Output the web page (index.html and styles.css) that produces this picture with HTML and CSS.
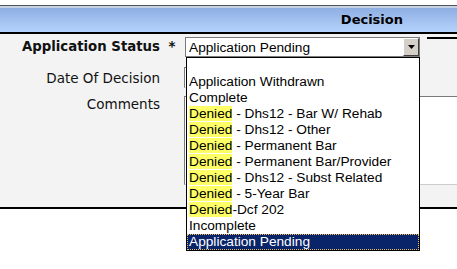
FILE: index.html
```html
<!DOCTYPE html>
<html>
<head>
<meta charset="utf-8">
<link rel="stylesheet" href="styles.css">
</head>
<body>
<div class="top-gap"></div>
<div class="header"><span class="title">Decision</span></div>
<div class="form">
  <div class="row row-status">
    <div class="label bold">Application Status</div>
    <div class="req">*</div>
    <div class="field status-field">
      <div class="select">
        <span class="select-text">Application Pending</span>
        <span class="select-btn"><svg width="7" height="4" viewBox="0 0 7 4"><path d="M0 0h7L3.5 4z" fill="#000"/></svg></span>
      </div>
      <ul class="dropdown">
        <li>&nbsp;</li>
        <li>Application Withdrawn</li>
        <li>Complete</li>
        <li><span class="hl">Denied</span> - Dhs12 - Bar W/ Rehab</li>
        <li><span class="hl">Denied</span> - Dhs12 - Other</li>
        <li><span class="hl">Denied</span> - Permanent Bar</li>
        <li><span class="hl">Denied</span> - Permanent Bar/Provider</li>
        <li><span class="hl">Denied</span> - Dhs12 - Subst Related</li>
        <li><span class="hl">Denied</span> - 5-Year Bar</li>
        <li><span class="hl">Denied</span>-Dcf 202</li>
        <li>Incomplete</li>
        <li class="selected">Application Pending</li>
      </ul>
    </div>
    <div class="side-rule"></div>
  </div>
  <div class="row row-date">
    <div class="label">Date Of Decision</div>
    <div class="req"></div>
    <div class="field"><div class="date-input"></div></div>
  </div>
  <div class="row row-comments">
    <div class="label">Comments</div>
    <div class="req"></div>
    <div class="field grow"><div class="textarea"></div></div>
  </div>
</div>
</body>
</html>
```
FILE: styles.css
```css
html, body {
  margin: 0;
  background: #fff;
}
body {
  font-family: "DejaVu Sans", Verdana, sans-serif;
  color: #111;
  min-height: 269px;
}
.top-gap { height: 5px; }
.header {
  height: 26px;
  border-top: 1px solid #52565c;
  border-bottom: 2px solid #000;
  background: linear-gradient(#c6d2e4 0, #c6d2e4 2px, #8eaee2 2px, #b5d3fd 100%);
  display: flex;
  justify-content: flex-end;
  align-items: center;
  padding-right: 54px;
}
.title {
  font-weight: bold;
  font-size: 13px;
  color: #000;
}
.form {
  background: #f3f3f3;
  height: 170px;
  padding-top: 3px;
  border-bottom: 2px solid #000;
}
.row { display: flex; }
.row-status { height: 20px; align-items: center; position: relative; z-index: 2; }
.row-date { height: 21px; margin-top: 10px; align-items: center; }
.row-comments { height: 89px; margin-top: 8px; align-items: flex-start; }
.label {
  width: 160px;
  flex: none;
  text-align: right;
  font-size: 13.5px;
  line-height: 16px;
  white-space: nowrap;
}
.label.bold { font-weight: bold; font-size: 13.3px; }
.req {
  width: 24px;
  flex: none;
  text-align: center;
  font-weight: bold;
  font-size: 13.3px;
  line-height: 16px;
}
.field { flex: none; }
.field.grow { flex: 1; min-width: 0; }
.status-field { position: relative; height: 20px; }
.select {
  margin-left: 1px;
  width: 235px;
  height: 20px;
  box-sizing: border-box;
  border: 1px solid #7b7b7b;
  background: #fff;
  display: flex;
  align-items: center;
  font: 13.7px "Liberation Sans", Arial, sans-serif;
  color: #000;
}
.select-text { padding-left: 3px; white-space: nowrap; }
.select-btn {
  margin-left: auto;
  width: 16px;
  height: 18px;
  box-sizing: border-box;
  background: #d4d0c8;
  border: 1px solid;
  border-color: #fff #404040 #404040 #fff;
  display: flex;
  align-items: center;
  justify-content: center;
}
.select-btn svg { display: block; }
.dropdown {
  position: absolute;
  top: 20px;
  left: 2px;
  width: 234px;
  box-sizing: border-box;
  margin: 0;
  padding: 0;
  list-style: none;
  border: 1px solid #000;
  background: #fff;
  font: 13.7px "Liberation Sans", Arial, sans-serif;
  line-height: 16px;
  color: #000;
  z-index: 5;
}
.dropdown li {
  height: 16px;
  padding-left: 2px;
  white-space: nowrap;
}
.dropdown li.selected {
  background: #0a246a;
  color: #fff;
  outline: 1px dotted #f0c060;
  outline-offset: -1px;
}
.hl { background: #ffff66; }
.side-rule {
  flex: 1;
  align-self: flex-start;
  margin-left: 7px;
  height: 0;
  border-top: 2px solid #000;
}
.date-input {
  width: 150px;
  height: 21px;
  box-sizing: border-box;
  border: 1px solid;
  border-color: #7a7a7a #d0d0d0 #d0d0d0 #7a7a7a;
  background: #fff;
}
.textarea {
  height: 89px;
  box-sizing: border-box;
  border-left: 1px solid #7a7a7a;
  border-top: 1px solid #7a7a7a;
  border-bottom: 1px solid #cccccc;
  background: #fff;
}
```
